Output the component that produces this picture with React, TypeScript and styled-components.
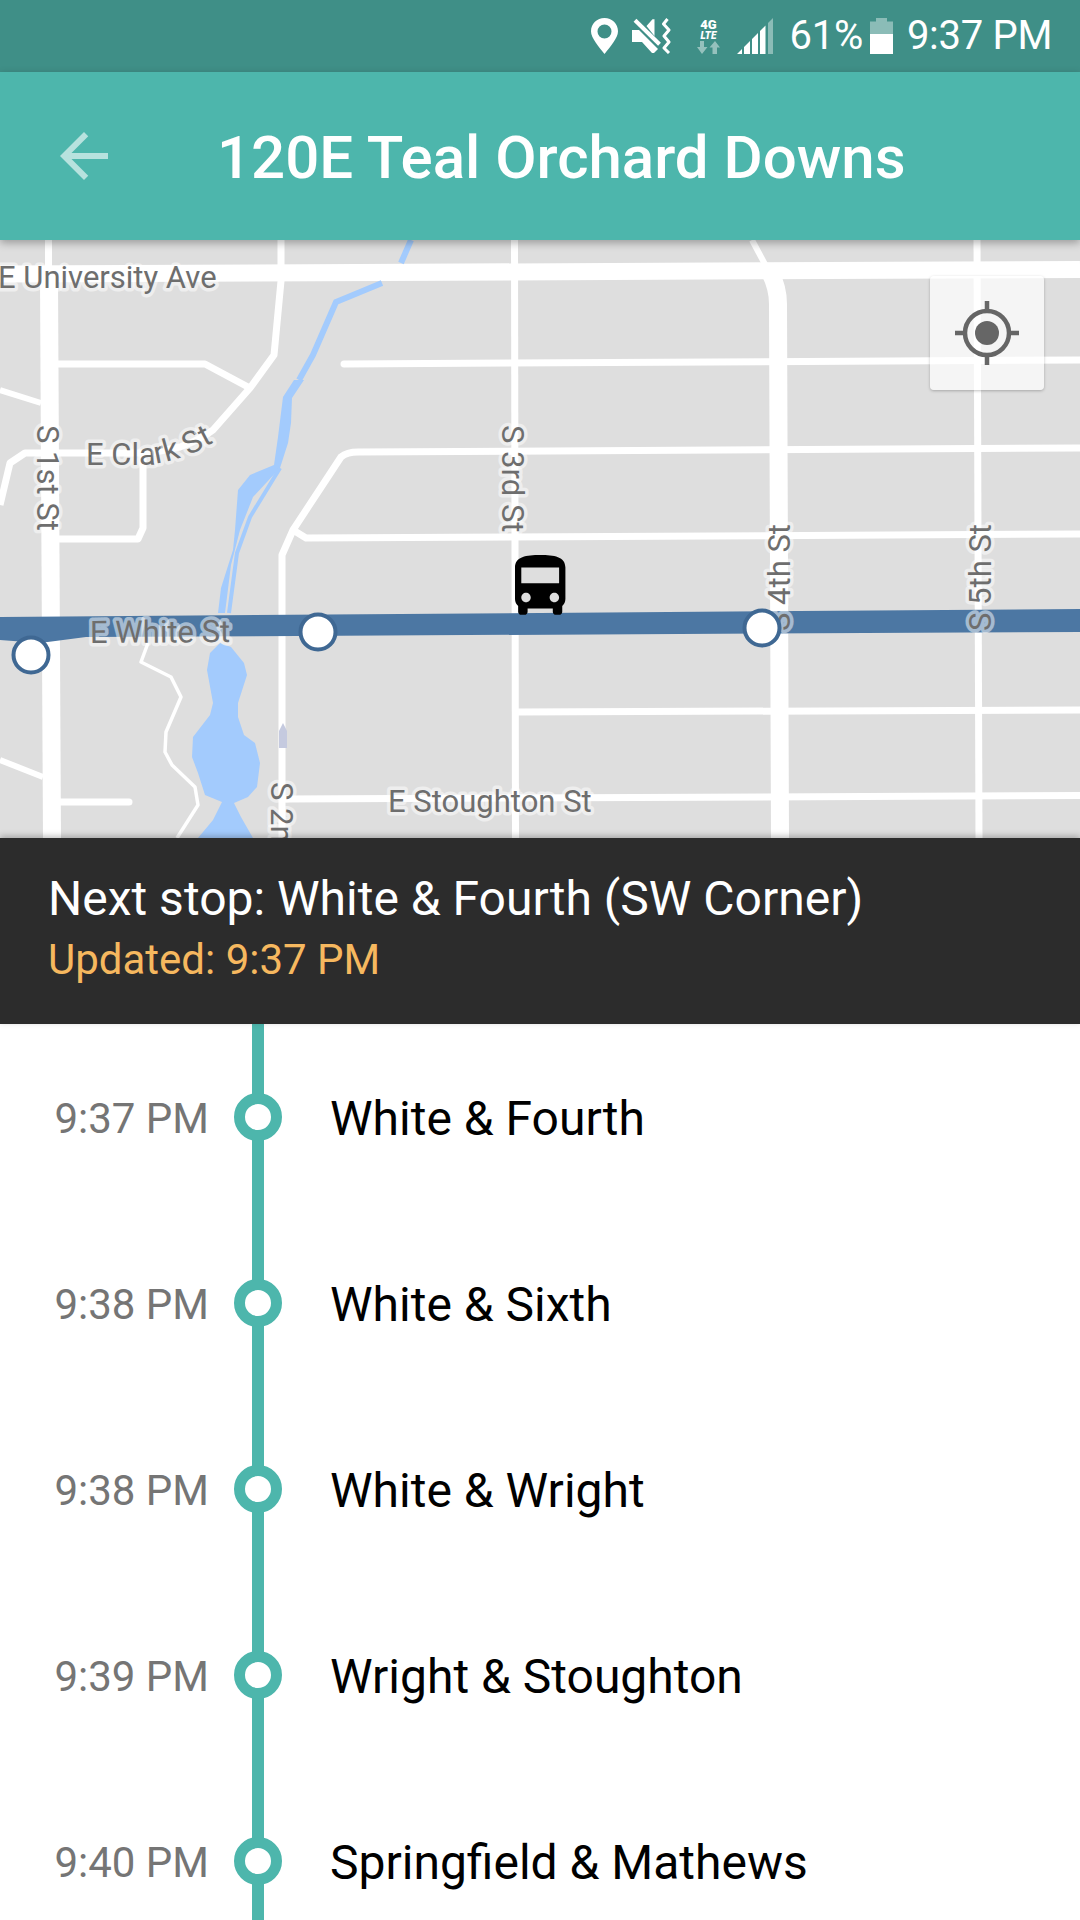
import React from 'react';
import styled, { createGlobalStyle } from 'styled-components';
import { MdArrowBack } from 'react-icons/md';

const stops = [
    { time: '9:37 PM', name: 'White & Fourth' },
    { time: '9:38 PM', name: 'White & Sixth' },
    { time: '9:38 PM', name: 'White & Wright' },
    { time: '9:39 PM', name: 'Wright & Stoughton' },
    { time: '9:40 PM', name: 'Springfield & Mathews' },
];

const GlobalStyle = createGlobalStyle`
    html, body {
        margin: 0;
        padding: 0;
        background: #fff;
        font-family: Roboto, "Liberation Sans", sans-serif;
    }
`;

const Screen = styled.div`
    width: 1080px;
    height: 1920px;
    overflow: hidden;
    display: flex;
    flex-direction: column;
    background: #fff;
`;

const StatusBar = styled.div`
    height: 72px;
    flex: none;
    background: #3f8f87;
    color: #fff;
    display: flex;
    align-items: center;
    justify-content: flex-end;
    padding-right: 28px;
    box-sizing: border-box;
`;

const StatusIcon = styled.svg<{ $gap: number }>`
    display: block;
    flex: none;
    margin-left: ${({ $gap }) => $gap}px;
`;

const StatusText = styled.span<{ $gap: number }>`
    font-size: 40px;
    letter-spacing: -0.3px;
    margin-left: ${({ $gap }) => $gap}px;
    line-height: 72px;
    white-space: nowrap;
`;

const AppBar = styled.div`
    height: 168px;
    flex: none;
    background: #4db6ac;
    display: flex;
    align-items: center;
    position: relative;
    z-index: 2;
    box-shadow: 0 3px 8px rgba(0, 0, 0, 0.3);
`;

const BackButton = styled.div`
    width: 217px;
    flex: none;
    padding-left: 48px;
    box-sizing: border-box;
    display: flex;
    color: rgba(255, 255, 255, 0.6);
`;

const Title = styled.h1`
    margin: 2px 0 0;
    color: #fff;
    font-size: 60px;
    font-weight: 500;
    white-space: nowrap;
`;

const MapPanel = styled.div`
    height: 598px;
    flex: none;
    position: relative;
    background: #dedede;
    overflow: hidden;
`;

const MapDrawing = styled.svg`
    display: block;
`;

const StreetLabel = styled.text`
    font-family: Roboto, sans-serif;
    font-size: 31px;
    fill: #6e6e6e;
    stroke: rgba(255, 255, 255, 0.5);
    stroke-width: 7px;
    stroke-linejoin: round;
    paint-order: stroke;
`;

const LocateButton = styled.div`
    position: absolute;
    top: 36px;
    left: 930px;
    width: 114px;
    height: 114px;
    border-radius: 4px;
    background: rgba(255, 255, 255, 0.7);
    box-shadow: 0 1px 3px rgba(0, 0, 0, 0.25);
    display: flex;
    align-items: center;
    justify-content: center;
`;

const NextStopBar = styled.div`
    height: 186px;
    flex: none;
    box-sizing: border-box;
    padding: 28px 48px 0;
    background: #2c2c2c;
    position: relative;
    z-index: 2;
    box-shadow: 0 -2px 6px rgba(0, 0, 0, 0.25);
`;

const NextStopText = styled.div`
    color: #fff;
    font-size: 48px;
    line-height: 66px;
    white-space: nowrap;
`;

const UpdatedText = styled.div`
    color: #f6b85f;
    font-size: 42px;
    line-height: 56px;
    white-space: nowrap;
`;

const StopRow = styled.div`
    height: 186px;
    flex: none;
    display: flex;
    align-items: center;
`;

const StopTime = styled.div`
    width: 209px;
    flex: none;
    padding-top: 2px;
    text-align: right;
    color: #757575;
    font-size: 42px;
    white-space: nowrap;
`;

const Rail = styled.div`
    width: 48px;
    height: 100%;
    flex: none;
    margin: 0 48px 0 25px;
    position: relative;
    display: flex;
    align-items: center;
    justify-content: center;

    &::before {
        content: '';
        position: absolute;
        top: 0;
        bottom: 0;
        left: 18px;
        width: 12px;
        background: #4db6ac;
    }
`;

const RailDot = styled.div`
    width: 48px;
    height: 48px;
    box-sizing: border-box;
    border: 11px solid #4db6ac;
    border-radius: 50%;
    background: #fff;
    position: relative;
`;

const StopName = styled.div`
    padding-top: 2px;
    color: #000;
    font-size: 48px;
    white-space: nowrap;
`;

const StatusIcons = () => (
    <>
        <StatusIcon $gap={0} width="27" height="36" viewBox="0 0 27 36">
            <path
                fillRule="evenodd"
                fill="#fff"
                d="M13.5 0C6 0 0 5.8 0 13.2 0 20 8 29 13.5 36 19 29 27 20 27 13.2 27 5.8 21 0 13.5 0zm0 6.5a7 7 0 1 1 0 14 7 7 0 0 1 0-14z"
            />
        </StatusIcon>
        <StatusIcon $gap={14} width="39" height="36" viewBox="0 0 39 36">
            <path fill="#fff" d="M0 12h7l19 19-4 4h-2L10 24H0zM14.5 8l6-6.7h2v16.7z" />
            <path stroke="#fff" strokeWidth="4" d="M3 2.3l24.5 24" />
            <path
                stroke="#fff"
                strokeWidth="3"
                fill="none"
                strokeLinejoin="round"
                d="M35.5 1l-4 5 5.5 6-5 6 5 6-5 6 5 5"
            />
        </StatusIcon>
        <StatusIcon $gap={26} width="23" height="36" viewBox="0 0 23 36">
            <text x="11.5" y="11" textAnchor="middle" fontFamily="Roboto" fontWeight="900" fontSize="13" fill="#fff">
                4G
            </text>
            <text
                x="11.5"
                y="21"
                textAnchor="middle"
                fontFamily="Roboto"
                fontWeight="900"
                fontStyle="italic"
                fontSize="10"
                fill="#fff"
            >
                LTE
            </text>
            <path
                fill="rgba(255,255,255,0.45)"
                d="M3 23h4v6h3.5L5 36 0 29h3zM18 23l5 6.5h-3V36h-4.500v-6.500H12.500z"
            />
        </StatusIcon>
        <StatusIcon $gap={17} width="36" height="36" viewBox="0 0 36 36">
            <path fill="#fff" d="M0 36l5-5v5zM7 29l6-6v13H7zM15 21l6-6v21h-6zM23 13l5.500-5.500V36H23z" />
            <path fill="rgba(255,255,255,0.4)" d="M31 5l5-5v36h-5z" />
        </StatusIcon>
        <StatusText $gap={17}>61%</StatusText>
        <StatusIcon $gap={7} width="23" height="36" viewBox="0 0 23 36">
            <path fill="rgba(255,255,255,0.4)" d="M6 0h11v3.500h6V16H0V3.500h6z" />
            <path fill="#fff" d="M0 16h23v20H0z" />
        </StatusIcon>
        <StatusText $gap={14}>9:37 PM</StatusText>
    </>
);

const LocateIcon = () => (
    <svg width="66" height="66" viewBox="0 0 66 66" fill="none" stroke="#666" strokeWidth="4.500">
        <circle cx="33" cy="33" r="22" />
        <circle cx="33" cy="33" r="12" fill="#666" stroke="none" />
        <path d="M33 1v10M33 55v10M1 33h10M55 33h10" />
    </svg>
);

const MapRoads = () => (
    <g fill="none" stroke="#fff" strokeLinejoin="round">
        {/* avenues */}
        <path strokeWidth="17" d="M0 274L1080 269.500" />
        <path strokeWidth="18" d="M49 281L52 838" />
        <path strokeWidth="18" d="M770 272Q778 288 778 304L780 838" />
        <path strokeWidth="6" d="M752 240L768 270" />
        {/* thin north-south streets */}
        <path strokeWidth="7" d="M48.500 240V266" />
        <path strokeWidth="7" d="M514.500 240L515.500 838" />
        <path strokeWidth="7" d="M977 240L979 838" />
        <path strokeWidth="7" d="M281 240V281L274 355L250 388L213 430Q200 440 180 447L150 453H25L10 463L0 505" />
        <path strokeWidth="7" d="M58 364H205L248 387" />
        <path strokeWidth="6" d="M0 390L41 403" />
        <path strokeWidth="6" d="M0 760L43 777" />
        <path strokeWidth="7" d="M143 453V528L138 539H58" />
        {/* cross streets */}
        <path strokeWidth="7" strokeLinecap="round" d="M344 364L1080 360" />
        <path strokeWidth="7" d="M1080 448L358 452Q347 452 341 457L293 530L282 555V838" />
        <path strokeWidth="7" d="M293 530L306 538L1080 534" />
        <path strokeWidth="7" d="M518 712L1080 710" />
        <path strokeWidth="7" d="M285 799L1080 795.500" />
        <path strokeWidth="7" strokeLinecap="round" d="M60 802H129" />
        <path strokeWidth="3.500" d="M148 643L141 662L171 677L181 697L166 732L165 752L172 765L195 787L198 805L177 838" />
    </g>
);

const MapWater = () => (
    <g fill="#a3cbfd">
        <path fill="none" stroke="#a3cbfd" strokeWidth="6" d="M411 240L401 263M382 283L336 302L313 355L299 380" />
        <path d="M294 380L283 397L278 437L274 465L250 475L238 490L235 530L233 550L221 588L218 613H225L231 565L240 530L253 497L280 468L288 443L291 423L292 398L304 380Z" />
        <path fill="none" stroke="#a3cbfd" strokeWidth="4" d="M280 468L250 517L237 553L229 613" />
        <path d="M207 670L210 653L220 643L231 647L244 663L247 675L238 703L238 717L244 735L255 743L260 763L257 787L248 797L234 803L241 817L253 838H198L213 820L222 802L205 795L198 773L192 757L193 737L210 715L213 703Z" />
    </g>
);

const MapView = () => (
    <MapDrawing width="1080" height="598" viewBox="0 240 1080 598">
        <MapRoads />
        <MapWater />
        <path fill="#c5cadf" d="M283 723l4 8v17h-8v-17z" />
        <path fill="#4c77a3" d="M0 617L1080 609V632L86 637L40 643L0 640Z" />
        <StreetLabel x="-2" y="288">
            E University Ave
        </StreetLabel>
        <path id="clark" fill="none" d="M86 465H150L165 462L190 455L228 435" />
        <StreetLabel>
            <textPath href="#clark">E Clark St</textPath>
        </StreetLabel>
        <StreetLabel transform="translate(37 425) rotate(90)">S 1st St</StreetLabel>
        <StreetLabel transform="translate(502 425) rotate(90)">S 3rd St</StreetLabel>
        <StreetLabel transform="translate(271 782) rotate(90)">S 2nd St</StreetLabel>
        <StreetLabel transform="translate(790 631) rotate(-90)">S 4th St</StreetLabel>
        <StreetLabel transform="translate(991 631) rotate(-90)">S 5th St</StreetLabel>
        <StreetLabel transform="rotate(-0.4 90 643)" x="90" y="643">
            E White St
        </StreetLabel>
        <StreetLabel x="388" y="812">
            E Stoughton St
        </StreetLabel>
        <g fill="#fff" stroke="#3f6893" strokeWidth="4">
            <circle cx="31" cy="655" r="17.500" />
            <circle cx="318" cy="632" r="17.500" />
            <circle cx="762" cy="628" r="17.500" />
        </g>
        <path
            transform="translate(502.400 548.700) scale(3.150)"
            d="M4 16c0 .88.39 1.670 1 2.220V20c0 .55.45 1 1 1h1c.55 0 1-.45 1-1v-1h8v1c0 .55.45 1 1 1h1c.55 0 1-.45 1-1v-1.780c.61-.55 1-1.340 1-2.220V6c0-3.500-3.580-4-8-4s-8 .5-8 4v10zm3.500 1c-.83 0-1.500-.67-1.500-1.500S6.670 14 7.500 14s1.500.67 1.500 1.500S8.330 17 7.500 17zm9 0c-.83 0-1.500-.67-1.500-1.500s.67-1.500 1.500-1.500 1.500.67 1.500 1.500-.67 1.500-1.500 1.500zm1.500-6H6V6h12v5z"
        />
    </MapDrawing>
);

const App: React.FC = () => (
    <Screen>
        <GlobalStyle />
        <StatusBar>
            <StatusIcons />
        </StatusBar>
        <AppBar>
            <BackButton>
                <MdArrowBack size={72} />
            </BackButton>
            <Title>120E Teal Orchard Downs</Title>
        </AppBar>
        <MapPanel>
            <MapView />
            <LocateButton>
                <LocateIcon />
            </LocateButton>
        </MapPanel>
        <NextStopBar>
            <NextStopText>Next stop: White &amp; Fourth (SW Corner)</NextStopText>
            <UpdatedText>Updated: 9:37 PM</UpdatedText>
        </NextStopBar>
        {stops.map((stop) => (
            <StopRow key={stop.name}>
                <StopTime>{stop.time}</StopTime>
                <Rail>
                    <RailDot />
                </Rail>
                <StopName>{stop.name}</StopName>
            </StopRow>
        ))}
    </Screen>
);

export default App;
